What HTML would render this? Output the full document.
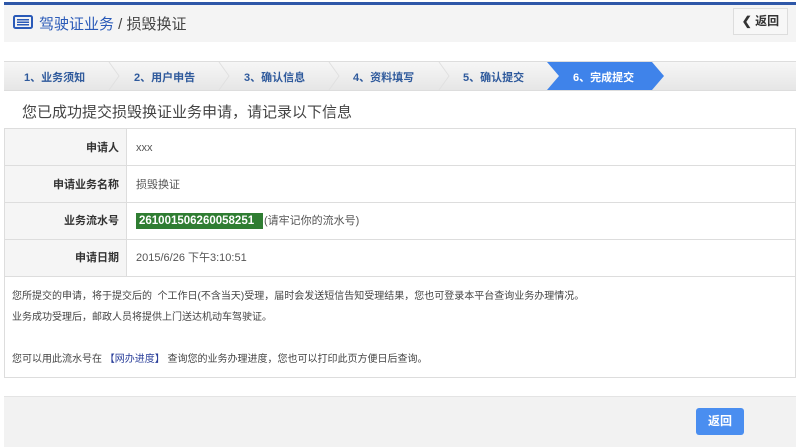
<!DOCTYPE html><html><head><meta charset="utf-8"><style>
*{margin:0;padding:0;box-sizing:border-box}
body{width:800px;height:447px;background:#fff;font-family:"Liberation Sans","Noto Sans CJK SC",sans-serif;color:#333;position:relative;overflow:hidden}
.a{position:absolute}
.l{position:absolute;left:5px;width:114px;font-size:11px;font-weight:bold;text-align:right;line-height:16px}
.v{position:absolute;left:136px;font-size:11px;color:#555;line-height:16px}
</style></head><body>
<div class="a" style="left:4px;top:2px;width:792px;height:3px;background:#2e57a8"></div>
<div class="a" style="left:4px;top:5px;width:792px;height:37px;background:#f4f4f4"></div>
<svg class="a" style="left:13px;top:15px" width="20" height="14"><rect x="1" y="1" width="18" height="12" rx="1.5" fill="none" stroke="#2a5ab8" stroke-width="2"/><rect x="4" y="4" width="12" height="1.5" fill="#2a5ab8"/><rect x="4" y="6.5" width="12" height="1.5" fill="#2a5ab8"/><rect x="4" y="9" width="12" height="1.5" fill="#2a5ab8"/></svg>
<div class="a" style="left:39px;top:13px;font-size:15px;color:#2a5ab8;white-space:nowrap">驾驶证业务 <span style="color:#444">/ 损毁换证</span></div>
<div class="a" style="left:733px;top:8px;width:55px;height:27px;border:1px solid #ddd;background:#f7f7f7;font-size:12px;font-weight:bold;text-align:center;line-height:25px;color:#333">❮ 返回</div>
<div class="a" style="left:4px;top:61px;width:792px;height:30px;background:linear-gradient(#f6f6f6,#e6e6e6);border-top:1px solid #ddd;border-bottom:1px solid #ddd"></div>
<svg class="a" style="left:4px;top:62px" width="792" height="28">
<g stroke="#e0e0e0" fill="none"><path d="M105 0l10 14-10 14M215 0l10 14-10 14M325 0l10 14-10 14M435 0l10 14-10 14"/></g>
<path d="M543 0H648l12 14-12 14H543l12-14z" fill="#3f83ea"/>
</svg>
<div class="a" style="top:69px;font-size:11px;font-weight:bold;color:#2f5a9c;white-space:nowrap;left:0;width:800px">
<span class="a" style="left:24px">1、业务须知</span><span class="a" style="left:134px">2、用户申告</span><span class="a" style="left:244px">3、确认信息</span><span class="a" style="left:353px">4、资料填写</span><span class="a" style="left:463px">5、确认提交</span><span class="a" style="left:573px;color:#fff">6、完成提交</span></div>
<div class="a" style="left:22px;top:101px;font-size:15px;color:#444;white-space:nowrap">您已成功提交损毁换证业务申请，请记录以下信息</div>
<div class="a" style="left:4px;top:128px;width:792px;height:250px;border:1px solid #ddd"></div>
<div class="a" style="left:5px;top:129px;width:122px;height:147px;background:#f5f5f5;border-right:1px solid #ddd"></div>
<div class="a" style="left:5px;top:165px;width:790px;height:1px;background:#ddd"></div>
<div class="a" style="left:5px;top:202px;width:790px;height:1px;background:#ddd"></div>
<div class="a" style="left:5px;top:239px;width:790px;height:1px;background:#ddd"></div>
<div class="a" style="left:5px;top:276px;width:790px;height:1px;background:#ddd"></div>
<div class="l" style="top:140px">申请人</div>
<div class="l" style="top:177px">申请业务名称</div>
<div class="l" style="top:213px">业务流水号</div>
<div class="l" style="top:250px">申请日期</div>
<div class="v" style="top:140px">xxx</div>
<div class="v" style="top:177px">损毁换证</div>
<div class="a" style="left:136px;top:213px;height:16px;width:127px;background:#2f7d32;color:#fff;font-weight:bold;font-size:11.5px;padding-left:3px;line-height:16px">261001506260058251</div>
<div class="v" style="left:264px;top:213px">(请牢记你的流水号)</div>
<div class="v" style="top:250px">2015/6/26 下午3:10:51</div>
<div class="a" style="left:12px;top:286px;font-size:10px;color:#444;line-height:21px;white-space:nowrap">您所提交的申请，将于提交后的&nbsp;&nbsp;个工作日(不含当天)受理，届时会发送短信告知受理结果，您也可登录本平台查询业务办理情况。<br>业务成功受理后，邮政人员将提供上门送达机动车驾驶证。<br><br>您可以用此流水号在 <span style="color:#2a3f9a">【网办进度】</span> 查询您的业务办理进度，您也可以打印此页方便日后查询。</div>
<div class="a" style="left:4px;top:396px;width:792px;height:51px;background:#f2f2f2;border-top:1px solid #e4e4e4"></div>
<div class="a" style="left:696px;top:408px;width:48px;height:27px;background:#4a8ef0;border-radius:3px;color:#fff;font-size:12px;font-weight:bold;text-align:center;line-height:27px">返回</div>
</body></html>
